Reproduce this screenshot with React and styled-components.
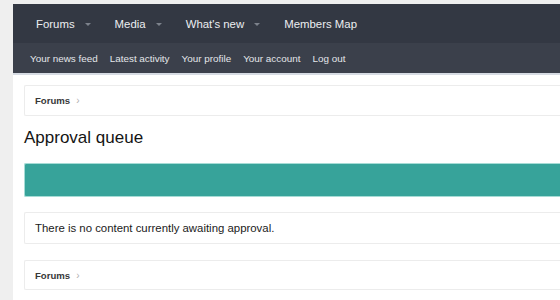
import React from "react";
import styled, { createGlobalStyle } from "styled-components";

const Global = createGlobalStyle`
  html, body { margin: 0; padding: 0; overflow: hidden; background: #efefef; }
  body { font-family: "Liberation Sans", Arial, sans-serif; }
  * { box-sizing: border-box; }
`;

const Page = styled.div`
  padding: 4px 0 0 13px;
  width: 100%;
`;

const Header = styled.header`
  background: #333843;
  border-bottom: 2px solid #d6dbe3;
`;

const TopNav = styled.nav`
  height: 39px;
  display: flex;
  align-items: center;
  padding-left: 23px;
  gap: 24px;
`;

const TopItem = styled.span`
  display: flex;
  align-items: center;
  gap: 10px;
  color: #eceef1;
  font-size: 11.4px;
`;

const Caret = styled.span`
  width: 0;
  height: 0;
  border-left: 3px solid transparent;
  border-right: 3px solid transparent;
  border-top: 3px solid #7d828c;
  margin-top: 1px;
`;

const SubNav = styled.nav`
  height: 30px;
  background: #3b404b;
  display: flex;
  align-items: center;
  padding-left: 17px;
  gap: 12px;
`;

const SubItem = styled.span`
  color: #e4e6ea;
  font-size: 9.9px;
`;

const Content = styled.main`
  background: #fff;
  padding: 10px 0 20px 11px;
  display: flex;
  flex-direction: column;
`;

const Box = styled.div`
  height: ${(p) => p.$h}px;
  border: 1px solid #ececec;
  border-right: none;
  border-radius: 2px 0 0 2px;
  display: flex;
  align-items: center;
  padding-left: 10px;
  margin-bottom: ${(p) => p.$mb || 0}px;
`;

const Crumb = styled.span`
  font-weight: bold;
  font-size: 9.6px;
  color: #383838;
  display: flex;
  align-items: center;
  gap: 6px;
`;

const Chevron = styled.span`
  font-weight: normal;
  color: #b0b0b0;
  font-size: 10px;
`;

const Title = styled.h1`
  margin: 0 0 10px;
  font-weight: normal;
  font-size: 17px;
  line-height: 37px;
  color: #141414;
  height: 37px;
  padding-top: 3px;
`;

const TealBar = styled.div`
  height: 34px;
  background: #37a39a;
  border: 1px solid #a6dcd6;
  border-right: none;
  border-radius: 2px 0 0 2px;
  margin-bottom: 15px;
`;

const Message = styled.span`
  font-size: 11.4px;
  color: #1a1a1a;
`;

const Breadcrumb = () => (
  <Crumb>
    Forums <Chevron>›</Chevron>
  </Crumb>
);

export default function App() {
  return (
    <>
      <Global />
      <Page>
        <Header>
          <TopNav>
            <TopItem>Forums <Caret /></TopItem>
            <TopItem>Media <Caret /></TopItem>
            <TopItem>What's new <Caret /></TopItem>
            <TopItem>Members Map</TopItem>
          </TopNav>
          <SubNav>
            <SubItem>Your news feed</SubItem>
            <SubItem>Latest activity</SubItem>
            <SubItem>Your profile</SubItem>
            <SubItem>Your account</SubItem>
            <SubItem>Log out</SubItem>
          </SubNav>
        </Header>
        <Content>
          <Box $h={31}>
            <Breadcrumb />
          </Box>
          <Title>Approval queue</Title>
          <TealBar />
          <Box $h={32} $mb={16}>
            <Message>There is no content currently awaiting approval.</Message>
          </Box>
          <Box $h={30}>
            <Breadcrumb />
          </Box>
        </Content>
      </Page>
    </>
  );
}
